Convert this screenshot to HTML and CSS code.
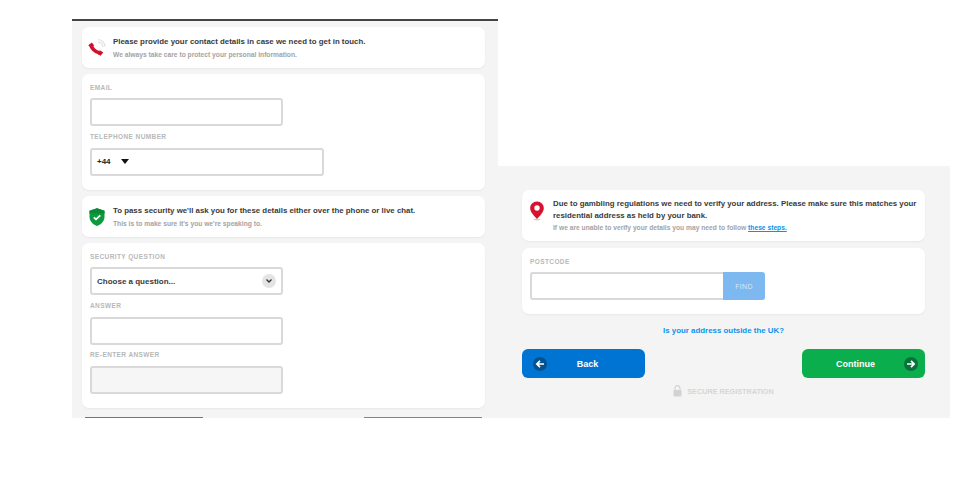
FILE: index.html
```html
<!DOCTYPE html>
<html lang="en">
<head>
<meta charset="utf-8">
<title>Registration</title>
<link rel="stylesheet" href="styles.css">
</head>
<body>
<main class="stage">
  <section class="panel panel-left">
    <div class="card note">
      <svg class="note-icon" width="20" height="20" viewBox="0 0 20 20">
        <path d="M11 4a5.500 5.500 0 0 1 5 5M11.500 1.500a8 8 0 0 1 6.500 7" fill="none" stroke="#dedede" stroke-width="1.200"/>
        <path d="M3.800 6.500C4.300 10 8 14.200 12.800 15" fill="none" stroke="#d3112e" stroke-width="3.600"/>
        <path d="M1.300 7.200 4.800 4.500 7.200 7.600 4 10z" fill="#d3112e"/>
        <path d="M10 15.800 12.900 12.300 16.200 14.500 13.600 17.700z" fill="#d3112e"/>
      </svg>
      <div>
        <p class="note-title">Please provide your contact details in case we need to get in touch.</p>
        <p class="note-sub">We always take care to protect your personal information.</p>
      </div>
    </div>
    <div class="card form form-contact">
      <label class="field-label">EMAIL</label>
      <div class="input"></div>
      <label class="field-label">TELEPHONE NUMBER</label>
      <div class="input input-wide">
        <span class="prefix">+44</span>
        <span class="caret"></span>
      </div>
    </div>
    <div class="card note">
      <svg class="note-icon" width="20" height="20" viewBox="0 0 20 20">
        <path d="M10 1.200 17.500 3.800V9.500c0 4.500-3 7.700-7.500 9.500-4.500-1.800-7.500-5-7.500-9.500V3.800z" fill="#0c9a3f"/>
        <path d="M10 1.200 17.500 3.800V6.500H2.500V3.800z" fill="#0a8a37"/>
        <path d="M6.800 10.300 9 12.400 13.300 8.300" fill="none" stroke="#fff" stroke-width="1.700"/>
      </svg>
      <div>
        <p class="note-title">To pass security we'll ask you for these details either over the phone or live chat.</p>
        <p class="note-sub">This is to make sure it's you we're speaking to.</p>
      </div>
    </div>
    <div class="card form form-security">
      <label class="field-label">SECURITY QUESTION</label>
      <div class="input input-select">
        <span class="select-text">Choose a question...</span>
        <span class="chevron">
          <svg width="8" height="6" viewBox="0 0 8 6"><path d="M1.500 1.500 4 4 6.500 1.500" fill="none" stroke="#333" stroke-width="1.300"/></svg>
        </span>
      </div>
      <label class="field-label">ANSWER</label>
      <div class="input"></div>
      <label class="field-label">RE-ENTER ANSWER</label>
      <div class="input input-disabled"></div>
    </div>
    <div class="peek">
      <span class="peek-btn peek-back"></span>
      <span class="peek-btn peek-next"></span>
    </div>
  </section>

  <section class="panel panel-right">
    <div class="card note note-address">
      <svg class="pin" width="16" height="20" viewBox="0 0 16 20">
        <ellipse cx="8" cy="18.600" rx="3.500" ry=".8" fill="#e3c3c8"/>
        <path d="M8 .5C4 .5 1.200 3.500 1.200 7.200c0 3.800 3.800 7.500 6.800 10.800 3-3.300 6.800-7 6.800-10.800C14.800 3.500 12 .5 8 .5z" fill="#d8112f"/>
        <circle cx="8" cy="7" r="2.700" fill="#fff"/>
      </svg>
      <div>
        <p class="note-title note-title-long">Due to gambling regulations we need to verify your address. Please make sure this matches your residential address as held by your bank.</p>
        <p class="note-sub note-sub-long">If we are unable to verify your details you may need to follow <a class="steps" href="#">these steps.</a></p>
      </div>
    </div>
    <div class="card form form-postcode">
      <label class="field-label">POSTCODE</label>
      <div class="postcode-row">
        <div class="input input-postcode"></div>
        <span class="find">FIND</span>
      </div>
    </div>
    <a class="outside" href="#">Is your address outside the UK?</a>
    <div class="actions">
      <a class="btn btn-back" href="#">
        <span class="btn-icon btn-icon-blue">
          <svg width="10" height="10" viewBox="0 0 10 10"><path d="M9 5H2M5 1.800 1.800 5 5 8.200" fill="none" stroke="#fff" stroke-width="1.700"/></svg>
        </span>
        <span class="btn-text">Back</span>
      </a>
      <a class="btn btn-next" href="#">
        <span class="btn-text">Continue</span>
        <span class="btn-icon btn-icon-green">
          <svg width="10" height="10" viewBox="0 0 10 10"><path d="M1 5H8M5 1.800 8.200 5 5 8.200" fill="none" stroke="#fff" stroke-width="1.700"/></svg>
        </span>
      </a>
    </div>
    <div class="secure">
      <svg width="9" height="12" viewBox="0 0 9 12"><path d="M2 5V3.200a2.500 2.500 0 0 1 5 0V5" fill="none" stroke="#d2d2d2" stroke-width="1.200"/><rect x=".5" y="5" width="8" height="6.500" rx="1" fill="#d2d2d2"/></svg>
      <span>SECURE REGISTRATION</span>
    </div>
  </section>
</main>
</body>
</html>
```

FILE: styles.css
```css
* { box-sizing: border-box; }
html, body { margin: 0; padding: 0; background: #fff; }
body { font-family: "Liberation Sans", Arial, sans-serif; color: #333; }
p { margin: 0; }
a { text-decoration: none; }

.stage {
  display: flex;
  align-items: flex-end;
  width: 955px;
  height: 418px;
  padding-left: 72px;
}

.panel { background: #f4f4f4; overflow: hidden; }
.panel-left {
  width: 426px;
  height: 399px;
  border-top: 2px solid #444;
  padding: 6px 13px 0 10px;
}
.panel-right {
  width: 452px;
  height: 252px;
  padding: 24px 25px 0 24px;
}

.card {
  background: #fff;
  border-radius: 7px;
  box-shadow: 0 1px 2px rgba(0, 0, 0, .05);
}

.note {
  display: flex;
  align-items: center;
  height: 41px;
  margin-bottom: 6px;
  padding-left: 5px;
}
.note-icon { flex: none; margin-right: 6px; margin-top: 1px; }
.note-title {
  font-size: 7.860px;
  font-weight: 700;
  line-height: 12px;
  color: #3a3a3a;
}
.note-sub {
  margin-top: 2px;
  font-size: 6.700px;
  font-weight: 700;
  line-height: 10px;
  color: #a3a3a3;
}

.form { padding: 9px 8px 0; margin-bottom: 6px; }
.form-contact { height: 116px; }
.form-security { height: 165px; margin-bottom: 9px; }
.field-label {
  display: block;
  height: 16px;
  font-size: 6.500px;
  font-weight: 700;
  line-height: 10px;
  letter-spacing: .4px;
  color: #b8b8b8;
}
.form .field-label:first-child { height: 15px; }
.input {
  width: 193px;
  height: 28px;
  margin-bottom: 5.500px;
  background: #fff;
  border: 2px solid #d9d9d9;
  border-radius: 3px;
}

.input-wide {
  display: flex;
  align-items: center;
  width: 234px;
  padding-left: 5px;
}
.prefix { font-size: 8px; font-weight: 700; color: #222; }
.caret {
  margin-left: 10px;
  border-left: 4px solid transparent;
  border-right: 4px solid transparent;
  border-top: 5px solid #111;
}
.input-select {
  display: flex;
  align-items: center;
  justify-content: space-between;
  padding: 0 5px 0 5px;
}
.select-text { font-size: 8px; font-weight: 700; color: #3a3a3a; }
.chevron {
  display: flex;
  align-items: center;
  justify-content: center;
  width: 14px;
  height: 14px;
  border-radius: 50%;
  background: #e4e4e4;
}
.input-disabled { background: #f6f6f6; }

.peek { display: flex; justify-content: space-between; padding: 0 3px; }
.peek-btn { display: block; width: 118px; height: 1px; }
.peek-back { background: #2f86d6; }
.peek-next { background: #3fae6b; }

.note-address {
  height: 51px;
  margin-bottom: 7px;
  padding-left: 7px;
}
.pin { flex: none; margin-right: 8px; margin-top: -10px; }
.note-title-long { line-height: 12px; }
.note-sub-long { margin-top: 1px; }
.steps { color: #0a93ee; text-decoration: underline; }

.form-postcode { height: 66px; margin-bottom: 10px; }
.postcode-row { display: flex; }
.input-postcode { margin: 0; border-right: 0; border-radius: 3px 0 0 3px; }
.find {
  display: flex;
  align-items: center;
  justify-content: center;
  width: 42px;
  height: 28px;
  background: #7db8f0;
  border-radius: 0 3px 3px 0;
  color: #d6e8fa;
  font-size: 7px;
  letter-spacing: .3px;
}

.outside {
  display: block;
  text-align: center;
  font-size: 7.900px;
  font-weight: 700;
  line-height: 14px;
  color: #0a93ee;
  margin-bottom: 11px;
}

.actions { display: flex; justify-content: space-between; }
.btn {
  display: flex;
  align-items: center;
  width: 123px;
  height: 29px;
  border-radius: 6px;
  color: #fff;
  font-size: 9px;
  font-weight: 700;
  padding: 0 7px 0 11px;
}
.btn-back { background: #0074d2; }
.btn-next { background: #0aae4c; }
.btn-text { flex: 1; text-align: center; }
.btn-back .btn-text { padding-right: 10px; }
.btn-next .btn-text { padding-right: 6px; }
.btn-icon {
  display: flex;
  align-items: center;
  justify-content: center;
  flex: none;
  width: 14px;
  height: 14px;
  border-radius: 50%;
}
.btn-icon-blue { background: #05508f; }
.btn-icon-green { background: #06723a; }

.secure {
  display: flex;
  align-items: center;
  justify-content: center;
  gap: 5px;
  margin-top: 7px;
  height: 12px;
  font-size: 7.250px;
  font-weight: 700;
  color: #d6d6d6;
}
```
